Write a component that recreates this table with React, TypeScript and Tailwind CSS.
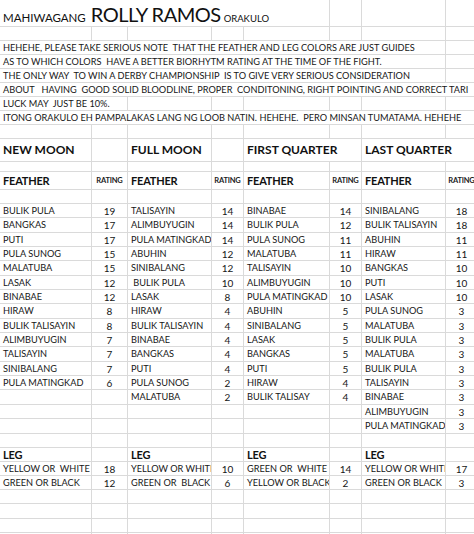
import React from "react";

type Cell = { span?: number; text?: string; cls?: string; clip?: boolean };

const spanCls: Record<number, string> = {
  1: "col-span-1",
  2: "col-span-2",
  3: "col-span-3",
  4: "col-span-4",
  5: "col-span-5",
  6: "col-span-6",
  7: "col-span-7",
  8: "col-span-8",
};

function Row({ h, cells }: { h: string; cells: Cell[] }) {
  return (
    <div className={`grid grid-cols-[92px_36px_84px_32px_86px_32px_84px_32px] ${h}`}>
      {cells.map((c, i) => (
        <div
          key={i}
          className={`${spanCls[c.span ?? 1]} flex items-center border-r border-b border-[#dadada] whitespace-pre ${
            c.clip ? "overflow-hidden" : "overflow-visible"
          } ${c.cls ?? ""}`}
        >
          {c.text}
        </div>
      ))}
    </div>
  );
}

const empty8: Cell[] = Array.from({ length: 8 }, () => ({}));

const body = "pl-[3px] text-[9.2px] text-[#161616]";
const num = "justify-center text-[10px] text-[#161616]";
const head = "pl-[3px] text-[12px] font-bold text-[#111]";
const sub = "pl-[3px] text-[11px] font-bold text-[#111] tracking-[-0.2px]";
const rating = "justify-center text-[7.5px] font-bold text-[#222] tracking-[-0.2px]";

const newMoon: [string, number][] = [
  ["BULIK PULA", 19], ["BANGKAS", 17], ["PUTI", 17], ["PULA SUNOG", 15], ["MALATUBA", 15],
  ["LASAK", 12], ["BINABAE", 12], ["HIRAW", 8], ["BULIK TALISAYIN", 8], ["ALIMBUYUGIN", 7],
  ["TALISAYIN", 7], ["SINIBALANG", 7], ["PULA MATINGKAD", 6],
];
const fullMoon: [string, number][] = [
  ["TALISAYIN", 14], ["ALIMBUYUGIN", 14], ["PULA MATINGKAD", 14], ["ABUHIN", 12], ["SINIBALANG", 12],
  [" BULIK PULA", 10], ["LASAK", 8], ["HIRAW", 4], ["BULIK TALISAYIN", 4], ["BINABAE", 4],
  ["BANGKAS", 4], ["PUTI", 4], ["PULA SUNOG", 2], ["MALATUBA", 2],
];
const firstQ: [string, number][] = [
  ["BINABAE", 14], ["BULIK PULA", 12], ["PULA SUNOG", 11], ["MALATUBA", 11], ["TALISAYIN", 10],
  ["ALIMBUYUGIN", 10], ["PULA MATINGKAD", 10], ["ABUHIN", 5], ["SINIBALANG", 5], ["LASAK", 5],
  ["BANGKAS", 5], ["PUTI", 5], ["HIRAW", 4], ["BULIK TALISAY", 4],
];
const lastQ: [string, number][] = [
  ["SINIBALANG", 18], ["BULIK TALISAYIN", 18], ["ABUHIN", 11], ["HIRAW", 11], ["BANGKAS", 10],
  ["PUTI", 10], ["LASAK", 10], ["PULA SUNOG", 3], ["MALATUBA", 3], ["BULIK PULA", 3],
  ["MALATUBA", 3], ["BULIK PULA", 3], ["TALISAYIN", 3], ["BINABAE", 3], ["ALIMBUYUGIN", 3],
  ["PULA MATINGKAD", 3],
];

const dataHeights = [
  "h-[14px]", "h-[15px]", "h-[14px]", "h-[14px]", "h-[15px]", "h-[14px]", "h-[14px]", "h-[15px]",
  "h-[14px]", "h-[14px]", "h-[15px]", "h-[14px]", "h-[14px]", "h-[15px]", "h-[14px]", "h-[15px]",
];

function pair(list: [string, number][], i: number): Cell[] {
  const it = list[i];
  if (!it) return [{}, {}];
  return [
    { text: it[0], cls: body, clip: true },
    { text: String(it[1]), cls: num },
  ];
}

const textLines: { text: string; span: number }[] = [
  { text: "HEHEHE, PLEASE TAKE SERIOUS NOTE  THAT THE FEATHER AND LEG COLORS ARE JUST GUIDES", span: 7 },
  { text: "AS TO WHICH COLORS  HAVE A BETTER BIORHYTM RATING AT THE TIME OF THE FIGHT.", span: 7 },
  { text: "THE ONLY WAY  TO WIN A DERBY CHAMPIONSHIP  IS TO GIVE VERY SERIOUS CONSIDERATION", span: 7 },
  { text: "ABOUT   HAVING  GOOD SOLID BLOODLINE, PROPER  CONDITONING, RIGHT POINTING AND CORRECT TARI", span: 8 },
  { text: "LUCK MAY  JUST BE 10%.", span: 2 },
  { text: "ITONG ORAKULO EH PAMPALAKAS LANG NG LOOB NATIN. HEHEHE.  PERO MINSAN TUMATAMA. HEHEHE", span: 8 },
];

const legRow1: Cell[] = [
  { text: "YELLOW OR  WHITE", cls: body, clip: true },
  { text: "18", cls: num },
  { text: "YELLOW OR WHITI", cls: body, clip: true },
  { text: "10", cls: num },
  { text: "GREEN OR  WHITE", cls: body, clip: true },
  { text: "14", cls: num },
  { text: "YELLOW OR WHITI", cls: body, clip: true },
  { text: "17", cls: num },
];

const legRow2: Cell[] = [
  { text: "GREEN OR BLACK", cls: body, clip: true },
  { text: "12", cls: num },
  { text: "GREEN OR  BLACK", cls: body, clip: true },
  { text: "6", cls: num },
  { text: "YELLOW OR BLACK", cls: body, clip: true },
  { text: "2", cls: num },
  { text: "GREEN OR BLACK", cls: body, clip: true },
  { text: "3", cls: num },
];

export default function App() {
  return (
    <div className="w-[474px] h-[534px] overflow-hidden bg-white font-['Lato',sans-serif] leading-none">
      <div className="w-[478px]">
        <div className="grid grid-cols-[92px_36px_84px_32px_86px_32px_84px_32px] h-[27px]">
          <div className="col-span-5 flex items-end pb-[3px] pl-[3px] border-r border-b border-[#dadada] whitespace-nowrap text-[#111]">
            <span className="text-[11.5px] mr-[5px]">MAHIWAGANG</span>
            <span className="text-[20px] tracking-[-0.5px] leading-[18px]">ROLLY RAMOS</span>
            <span className="text-[9.5px] ml-[3px]">ORAKULO</span>
          </div>
          <div className="border-r border-b border-[#dadada]" />
          <div className="border-r border-b border-[#dadada]" />
          <div className="border-r border-b border-[#dadada]" />
        </div>
        <Row h="h-[14px]" cells={empty8} />
        {textLines.map((l, i) => {
          const rest: Cell[] = Array.from({ length: 8 - l.span }, () => ({}));
          return (
            <Row
              key={i}
              h="h-[14px]"
              cells={[{ span: l.span, text: l.text, cls: body + (l.span === 8 ? " overflow-hidden" : "") }, ...rest]}
            />
          );
        })}
        <Row h="h-[14px]" cells={empty8} />
        <Row
          h="h-[23px]"
          cells={[
            { text: "NEW MOON", cls: head },
            {},
            { text: "FULL MOON", cls: head },
            {},
            { span: 2, text: "FIRST QUARTER", cls: head },
            { span: 2, text: "LAST QUARTER", cls: head },
          ]}
        />
        <Row h="h-[10px]" cells={empty8} />
        <Row
          h="h-[18px]"
          cells={[
            { text: "FEATHER", cls: sub },
            { text: "RATING", cls: rating },
            { text: "FEATHER", cls: sub },
            { text: "RATING", cls: rating },
            { text: "FEATHER", cls: sub },
            { text: "RATING", cls: rating },
            { text: "FEATHER", cls: sub },
            { text: "RATING", cls: rating },
          ]}
        />
        <Row h="h-[14px]" cells={empty8} />
        {dataHeights.map((h, i) => (
          <Row
            key={i}
            h={h}
            cells={[...pair(newMoon, i), ...pair(fullMoon, i), ...pair(firstQ, i), ...pair(lastQ, i)]}
          />
        ))}
        <Row h="h-[14px]" cells={empty8} />
        <Row
          h="h-[14px]"
          cells={[
            { text: "LEG", cls: sub },
            {},
            { text: "LEG", cls: sub },
            {},
            { text: "LEG", cls: sub },
            {},
            { text: "LEG", cls: sub },
            {},
          ]}
        />
        <Row h="h-[14px]" cells={legRow1} />
        <Row h="h-[14px]" cells={legRow2} />
        <Row h="h-[14px]" cells={empty8} />
        <Row h="h-[15px]" cells={empty8} />
        <Row h="h-[14px]" cells={empty8} />
        <Row h="h-[14px]" cells={empty8} />
      </div>
    </div>
  );
}
